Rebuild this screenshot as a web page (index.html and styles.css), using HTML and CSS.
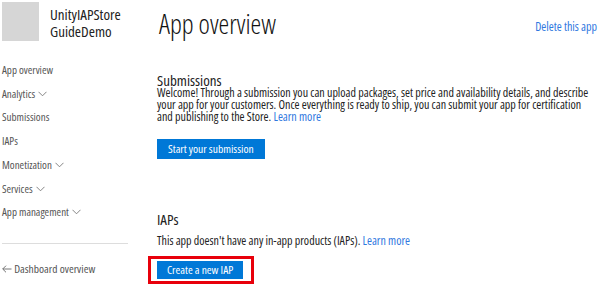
FILE: index.html
```html
<!DOCTYPE html>
<html lang="en">
<head>
  <meta charset="UTF-8" />
  <title>App overview</title>
  <meta name="viewport" content="width=device-width, initial-scale=1.0" />
  <link rel="stylesheet" href="styles.css">
</head>
<body>

  <div class="page">
    <aside class="sidebar">
      <div class="app-header">
        <div class="app-logo"></div>
        <div class="app-name">UnityIAPStore<br>GuideDemo</div>
      </div>

      <ul class="nav">
        <li>App overview</li>
        <li>Analytics <svg class="chevron" width="9" height="6" viewBox="0 0 9 6"><path d="M0.5 0.8 L4.5 4.8 L8.5 0.8" fill="none" stroke="#777" stroke-width="0.9"/></svg></li>
        <li>Submissions</li>
        <li>IAPs</li>
        <li>Monetization <svg class="chevron" width="9" height="6" viewBox="0 0 9 6"><path d="M0.5 0.8 L4.5 4.8 L8.5 0.8" fill="none" stroke="#777" stroke-width="0.9"/></svg></li>
        <li>Services <svg class="chevron" width="9" height="6" viewBox="0 0 9 6"><path d="M0.5 0.8 L4.5 4.8 L8.5 0.8" fill="none" stroke="#777" stroke-width="0.9"/></svg></li>
        <li>App management <svg class="chevron" width="9" height="6" viewBox="0 0 9 6"><path d="M0.5 0.8 L4.5 4.8 L8.5 0.8" fill="none" stroke="#777" stroke-width="0.9"/></svg></li>
      </ul>

      <div class="back-link">
        <svg class="arrow" width="10" height="8" viewBox="0 0 10 8"><path d="M9.5 4 H0.8 M4 0.7 L0.7 4 L4 7.3" fill="none" stroke="#666" stroke-width="0.9"/></svg>
        Dashboard overview
      </div>
    </aside>

    <main class="content">
      <div class="title-row">
        <h1>App overview</h1>
        <a href="#" class="delete-link">Delete this app</a>
      </div>

      <section class="submissions">
        <h2>Submissions</h2>
        <p>Welcome! Through a submission you can upload packages, set price and availability details, and describe your app for your customers. Once everything is ready to ship, you can submit your app for certification and publishing to the Store. <a href="#">Learn more</a></p>
        <button type="button">Start your submission</button>
      </section>

      <section class="iaps">
        <h2>IAPs</h2>
        <p>This app doesn't have any in-app products (IAPs). <a href="#">Learn more</a></p>
        <div class="highlight">
          <button type="button">Create a new IAP</button>
        </div>
      </section>
    </main>
  </div>

</body>
</html>
```

FILE: styles.css
```css
body {
  margin: 0;
  padding: 0;
  background: #fff;
  color: #222;
  font-family: 'Open Sans', 'Noto Sans', sans-serif;
  font-stretch: 75%;
}

.page {
  display: flex;
  width: 600px;
  height: 290px;
  overflow: hidden;
}

/* Left navigation */
.sidebar {
  width: 126px;
  padding: 2px 0 0 2px;
  flex-shrink: 0;
}

.app-header {
  display: flex;
  align-items: flex-start;
  gap: 11px;
}

.app-logo {
  width: 37px;
  height: 39px;
  background: #d6d6d6;
}

.app-name {
  font-size: 15px;
  line-height: 17px;
  color: #222;
  padding-top: 4px;
}

.nav {
  list-style: none;
  margin: 17px 0 0 0;
  padding: 0 0 19px 0;
  font-size: 11px;
  color: #555;
  border-bottom: 1px solid #ddd;
}

.nav li {
  line-height: 23.7px;
}

.chevron {
  vertical-align: 1px;
  margin-left: 1px;
}

.back-link {
  font-size: 11.5px;
  line-height: 14px;
  color: #555;
  margin-top: 18px;
}

.arrow {
  vertical-align: 0;
}

/* Main content */
.content {
  flex: 1;
  margin-left: 29px;
  margin-right: 3px;
}

.title-row {
  display: flex;
  justify-content: space-between;
  align-items: center;
  height: 46px;
}

h1 {
  margin: 0 0 0 2px;
  font-size: 27px;
  font-weight: 300;
  color: #111;
}

.delete-link {
  font-size: 12px;
  color: #2f78e0;
  text-decoration: none;
  margin-top: 6px;
}

h2 {
  margin: 0;
  font-size: 15px;
  font-weight: 400;
  line-height: 13px;
  color: #222;
}

p {
  margin: 0;
  font-size: 12px;
  line-height: 12px;
}

p a {
  color: #2f78e0;
  text-decoration: none;
}

.submissions {
  margin-top: 27.5px;
}

.submissions button {
  margin-top: 16px;
}

button {
  display: block;
  background: #0078d7;
  color: #fff;
  border: none;
  font: inherit;
  font-size: 11.5px;
  padding: 0 11px;
  height: 20px;
  cursor: pointer;
}

.iaps {
  margin-top: 54px;
}

.iaps p {
  margin-top: 9px;
}

.highlight {
  display: inline-block;
  margin-top: 9px;
  margin-left: -9px;
  border: 3px solid #e8000b;
  padding: 2px 8px 2px 6px;
}

.highlight button {
  height: 18px;
  padding: 0 10px;
}
```
